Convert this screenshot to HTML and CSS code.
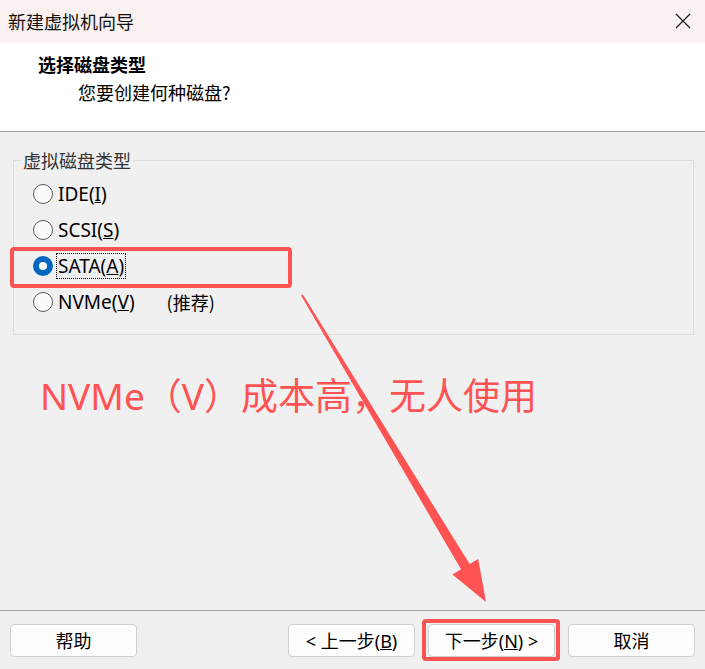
FILE: index.html
```html
<!DOCTYPE html>
<html lang="zh-CN">
<head>
<meta charset="utf-8">
<title>新建虚拟机向导</title>
<link rel="stylesheet" href="styles.css">
</head>
<body>
<div class="window">
  <div class="titlebar">
    <span class="title">新建虚拟机向导</span>
    <svg class="close" width="16" height="16" viewBox="0 0 16 16"><path d="M1 1 L15 15 M15 1 L1 15" stroke="#1a1a1a" stroke-width="1.2" fill="none"/></svg>
  </div>
  <div class="header">
    <div class="h-title">选择磁盘类型</div>
    <div class="h-sub">您要创建何种磁盘?</div>
  </div>
  <div class="body">
    <fieldset class="group">
      <legend>虚拟磁盘类型</legend>
      <div class="row"><span class="radio"></span><span class="label">IDE(<u>I</u>)</span></div>
      <div class="row"><span class="radio"></span><span class="label">SCSI(<u>S</u>)</span></div>
      <div class="row"><span class="radio checked"></span><span class="label focus">SATA(<u>A</u>)</span></div>
      <div class="row"><span class="radio"></span><span class="label">NVMe(<u>V</u>)</span><span class="rec">(推荐)</span></div>
    </fieldset>
    <div class="note">NVMe（V）成本高，无人使用</div>
  </div>
  <div class="footer">
    <button class="btn">帮助</button>
    <span class="spacer"></span>
    <button class="btn">&lt; 上一步(<u>B</u>)</button>
    <button class="btn">下一步(<u>N</u>) &gt;</button>
    <button class="btn">取消</button>
  </div>
  <div class="anno-box anno-sata"></div>
  <div class="anno-box anno-next"></div>
  <svg class="arrow" width="705" height="669" viewBox="0 0 705 669">
    <polygon fill="#ff5353" points="302.9,294.5 469.6,564.1 478.2,559.0 486,602 452.4,574.4 461.0,569.3 301.1,295.5"/>
  </svg>
</div>
</body>
</html>
```
FILE: styles.css
```css
* { box-sizing: border-box; }
html, body { margin: 0; padding: 0; }
body {
  font-family: "Noto Sans", "Noto Sans CJK SC", sans-serif;
  color: #000;
}
.window {
  position: relative;
  width: 705px;
  height: 669px;
  background: #f0f0f0;
  display: flex;
  flex-direction: column;
  overflow: hidden;
}
.titlebar {
  height: 42px;
  flex: none;
  background: #f9f0f0;
  display: flex;
  align-items: center;
  justify-content: space-between;
  padding: 0 14px 0 8px;
}
.title {
  font-family: "Noto Sans CJK SC", sans-serif;
  font-size: 18px;
  line-height: 24px;
  color: #111;
}
.close { display: block; }
.header {
  height: 90px;
  flex: none;
  background: #fff;
  border-bottom: 1px solid #a0a0a0;
  padding-top: 10px;
}
.h-title {
  font-family: "Noto Sans CJK SC", sans-serif;
  font-weight: 700;
  font-size: 18px;
  line-height: 24px;
  padding-left: 38px;
}
.h-sub {
  font-family: "Noto Sans CJK SC", sans-serif;
  font-size: 18px;
  line-height: 24px;
  padding-left: 78px;
  margin-top: 4px;
}
.body {
  flex: 1;
  padding: 18px 11px 0 13px;
}
.group {
  margin: 0;
  padding: 6px 0 14px 7px;
  border: 1px solid #dcdcdc;
  min-width: 0;
}
.group legend {
  font-family: "Noto Sans CJK SC", sans-serif;
  font-size: 18px;
  line-height: 20px;
  padding: 0 2px;
  color: #333;
}
.row {
  height: 36px;
  display: flex;
  align-items: center;
  padding-left: 12px;
}
.radio {
  width: 20px;
  height: 20px;
  border: 1px solid #5a5a5a;
  border-radius: 50%;
  background: #fbfbfb;
  flex: none;
}
.radio.checked {
  border: 6px solid #0067c0;
  background: #fff;
}
.label {
  font-size: 19px;
  line-height: 24px;
  margin-left: 3px;
  padding: 0 1px;
  border: 1px solid transparent;
}
.label.focus { border: 1px dotted #000; }
.rec {
  font-family: "Noto Sans CJK SC", sans-serif;
  font-size: 18px;
  margin-left: 30px;
}
.note {
  margin-top: 37px;
  padding-left: 27px;
  font-family: "Noto Sans", "Noto Sans CJK SC", sans-serif;
  font-size: 37px;
  line-height: 48px;
  color: #ff5353;
}
.footer {
  height: 59px;
  flex: none;
  border-top: 1px solid #a0a0a0;
  display: flex;
  align-items: flex-start;
  gap: 13px;
  padding: 13px 10px 0 10px;
}
.spacer { flex: 1; }
.btn {
  width: 127px;
  height: 33px;
  background: #fdfdfd;
  border: 1px solid #d0d0d0;
  border-radius: 4px;
  font-family: "Noto Sans", "Noto Sans CJK SC", sans-serif;
  font-size: 18px;
  line-height: 24px;
  color: #000;
  padding: 0;
}
.anno-box {
  position: absolute;
  border: 4px solid #ff5353;
  border-radius: 4px;
}
.anno-sata { left: 10px; top: 247px; width: 282px; height: 41px; }
.anno-next { left: 422px; top: 619px; width: 138px; height: 42px; }
.arrow {
  position: absolute;
  left: 0;
  top: 0;
  pointer-events: none;
}
```
